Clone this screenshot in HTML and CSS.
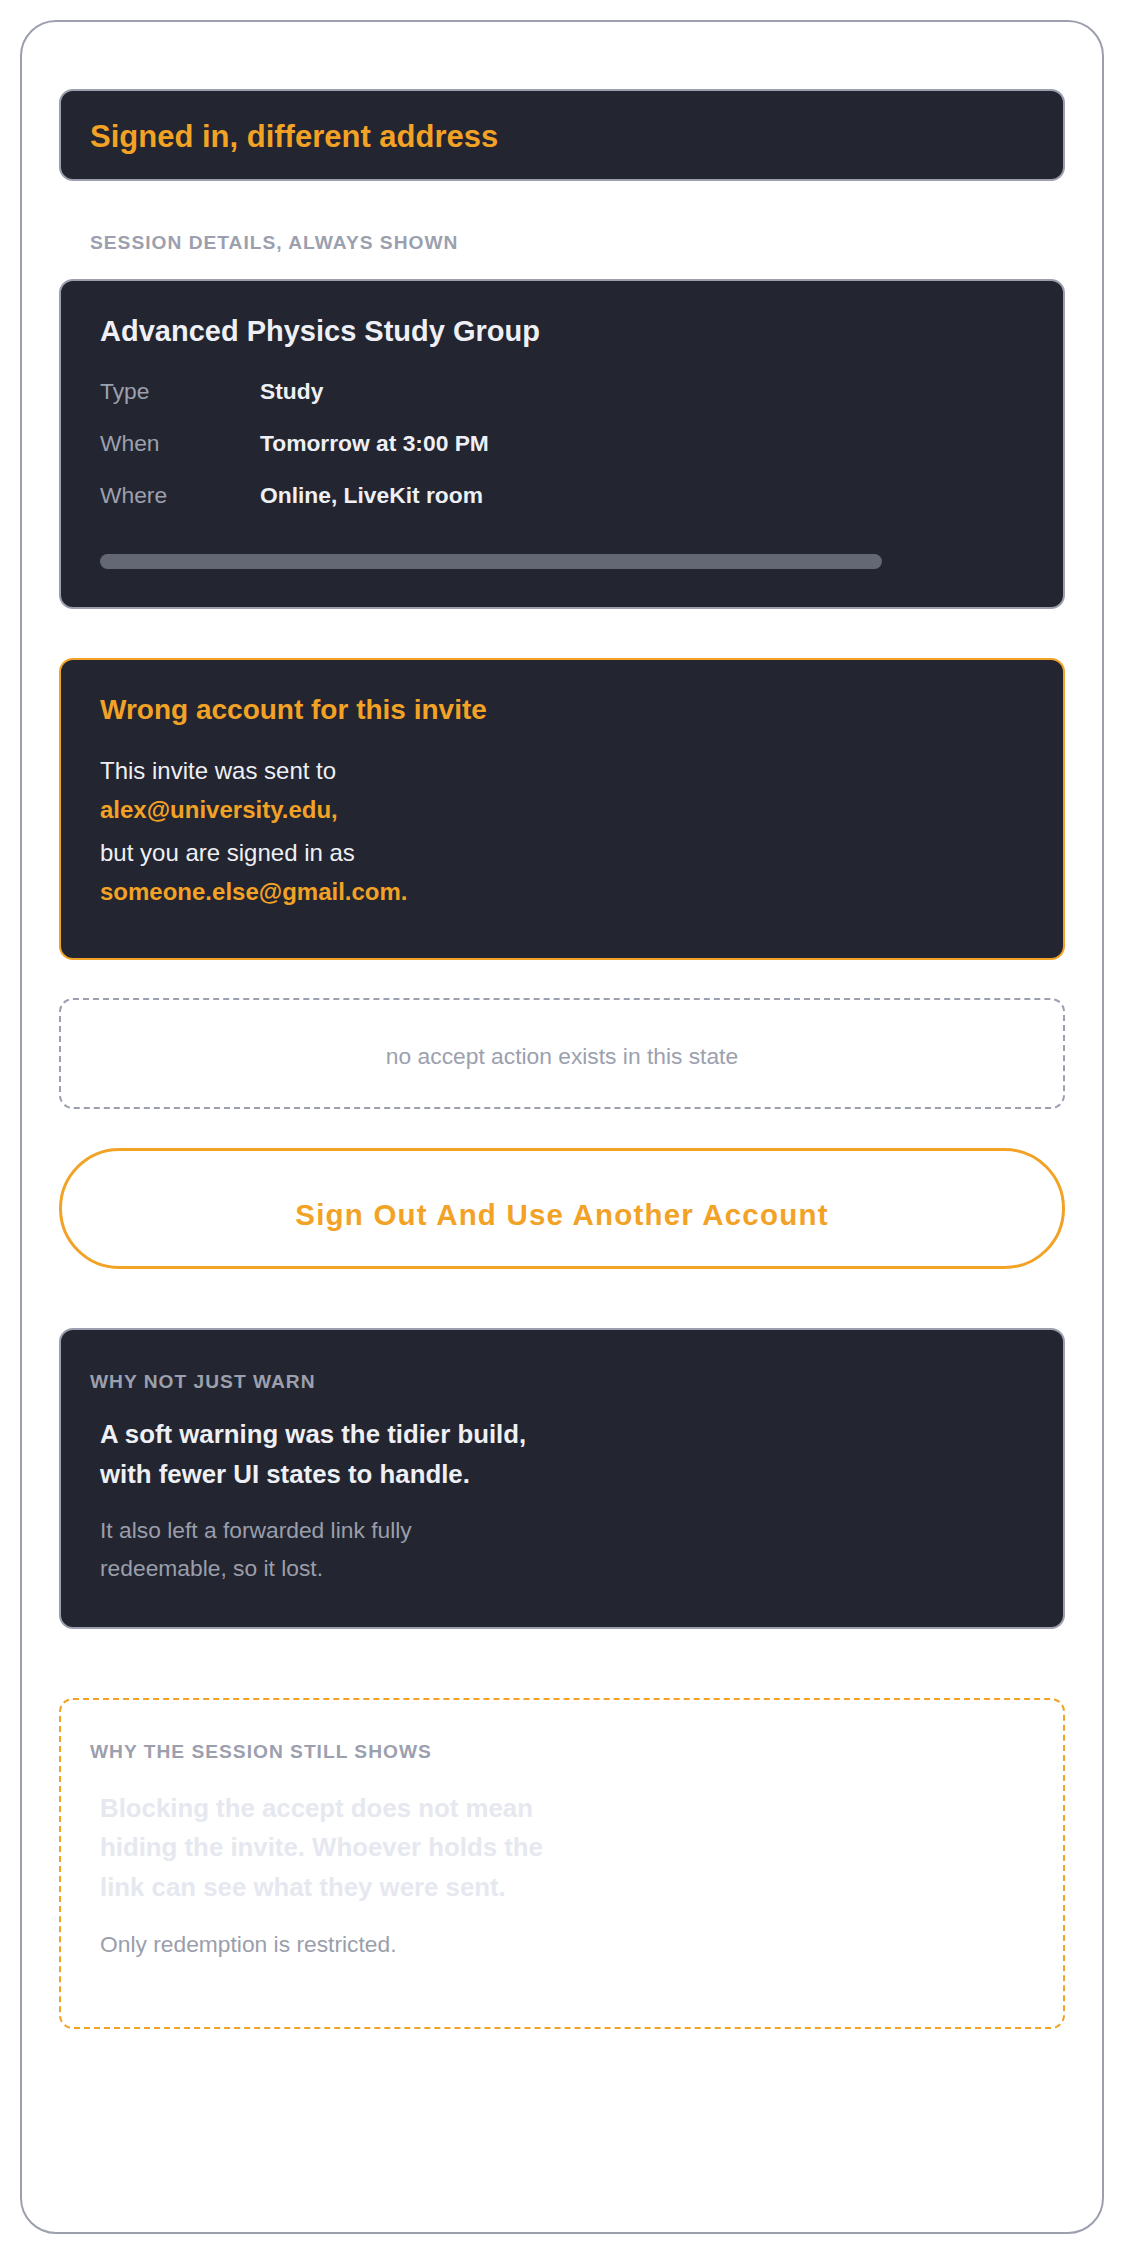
FILE: index.html
```html
<!DOCTYPE html>
<html lang="en">
<head>
    <meta charset="UTF-8">
    <meta name="viewport" content="width=device-width, initial-scale=1.0">
    <title>Invite, wrong account</title>
    <link rel="stylesheet" href="styles.css">
</head>
<body>
    <div class="frame">
        <header class="banner">
            <h1>Signed in, different address</h1>
        </header>

        <section class="details">
            <h2 class="eyebrow">Session details, always shown</h2>
            <div class="card">
                <h3 class="session-title">Advanced Physics Study Group</h3>
                <dl class="facts">
                    <div class="fact"><dt>Type</dt><dd>Study</dd></div>
                    <div class="fact"><dt>When</dt><dd>Tomorrow at 3:00 PM</dd></div>
                    <div class="fact"><dt>Where</dt><dd>Online, LiveKit room</dd></div>
                </dl>
                <div class="skeleton"></div>
            </div>
        </section>

        <div class="card mismatch">
            <h3>Wrong account for this invite</h3>
            <p>This invite was sent to <strong>alex@university.edu,</strong></p>
            <p>but you are signed in as <strong>someone.else@gmail.com.</strong></p>
        </div>

        <!-- the accept button is not rendered at all here -->
        <div class="no-action">no accept action exists in this state</div>

        <button type="button" class="signout">Sign Out And Use Another Account</button>

        <aside class="card note">
            <h4 class="eyebrow note-label">Why not just warn</h4>
            <p class="note-lead">A soft warning was the tidier build, with fewer UI states to handle.</p>
            <p class="note-aside">It also left a forwarded link fully redeemable, so it lost.</p>
        </aside>

        <aside class="card note note--open">
            <h4 class="eyebrow note-label">Why the session still shows</h4>
            <p class="note-lead">Blocking the accept does not mean hiding the invite. Whoever holds the link can see what they were sent.</p>
            <p class="note-aside">Only redemption is restricted.</p>
        </aside>
    </div>
</body>
</html>
```

FILE: styles.css
```css
body {
    margin: 0;
    font-family: "Liberation Sans", Arial, sans-serif;
    background: #ffffff;
    color: #232530;
}
.frame {
    margin: 20px;
    min-height: calc(100vh - 40px);
    box-sizing: border-box;
    border: 2px solid #9ca0ae;
    border-radius: 36px;
    padding: 67px 37px 40px;
}
.banner {
    background-color: #232530;
    border: 2px solid #9ca0ae;
    border-radius: 14px;
    padding: 27px 29px 23px;
}
.banner h1 {
    margin: 0;
    font-size: 31px;
    line-height: 38px;
    color: #f2a225;
}
.details {
    margin-top: 50px;
}
.eyebrow {
    margin: 0 0 0 31px;
    font-size: 19.2px;
    line-height: 24px;
    letter-spacing: 1px;
    text-transform: uppercase;
    font-weight: bold;
    color: #9ca0ae;
}
.card {
    background-color: #232530;
    border: 2px solid #9ca0ae;
    border-radius: 14px;
    padding: 32px 39px 38px;
}
.details .card {
    margin-top: 24px;
}
.session-title {
    margin: 0 0 24px;
    font-size: 29px;
    line-height: 36px;
    color: #eef0f5;
}
.facts {
    margin: 0;
    display: flex;
    flex-direction: column;
    gap: 16px;
}
.fact {
    display: flex;
    font-size: 22.8px;
    line-height: 36px;
}
.fact dt {
    width: 160px;
    color: #9ca0ae;
}
.fact dd {
    margin: 0;
    font-weight: bold;
    color: #eef0f5;
}
.skeleton {
    margin-top: 41px;
    width: 782px;
    height: 15px;
    border-radius: 8px;
    background-color: #646874;
}

/* wrong account warning */
.mismatch {
    margin-top: 49px;
    border-color: #f2a225;
    padding-bottom: 47px;
}
.mismatch h3 {
    margin: 0 0 23px;
    font-size: 28px;
    line-height: 36px;
    color: #f2a225;
}
.mismatch p {
    margin: 0;
    font-size: 24px;
    line-height: 39px;
    color: #eef0f5;
}
.mismatch p + p {
    margin-top: 4px;
}
.mismatch strong {
    display: block;
    color: #f2a225;
}

.no-action {
    margin-top: 38px;
    border: 2px dashed #9ca0ae;
    border-radius: 14px;
    padding: 38px 20px 33px;
    text-align: center;
    font-size: 22.8px;
    line-height: 36px;
    color: #9ca0ae;
}
.signout {
    display: block;
    width: 100%;
    margin-top: 39px;
    padding: 46px 20px 33px;
    border: 3px solid #f2a225;
    border-radius: 999px;
    background-color: #ffffff;
    color: #f2a225;
    font-family: "Liberation Sans", Arial, sans-serif;
    font-size: 29.5px;
    line-height: 36px;
    font-weight: bold;
    letter-spacing: 1.2px;
    cursor: pointer;
}

/* explanation cards */
.note {
    margin-top: 59px;
    padding: 40px 29px 39px;
}
.note-label {
    margin: 0;
}
.note-lead {
    margin: 21px 0 0 10px;
    max-width: 460px;
    font-size: 25.8px;
    line-height: 39.5px;
    font-weight: bold;
    color: #eef0f5;
}
.note-aside {
    margin: 17px 0 0 10px;
    max-width: 420px;
    font-size: 22.8px;
    line-height: 38.4px;
    color: #9a9eab;
}
.note--open {
    margin-top: 69px;
    background-color: transparent;
    border: 2px dashed #f2a225;
    padding-bottom: 63px;
}
.note--open .note-lead {
    margin-top: 25px;
    color: #e6e8f0;
}
.note--open .note-aside {
    margin-top: 18px;
}
```
